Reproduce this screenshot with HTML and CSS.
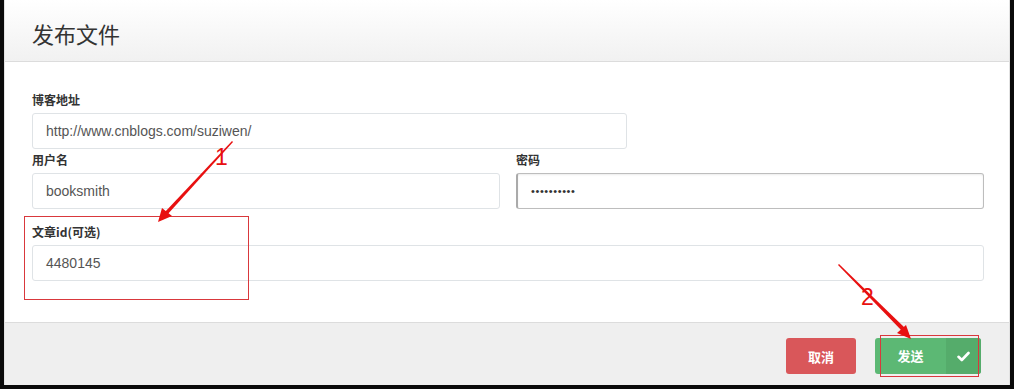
FILE: index.html
```html
<!DOCTYPE html>
<html lang="zh-CN">
<head>
    <meta charset="UTF-8">
    <title>发布文件</title>
    <link rel="stylesheet" href="styles.css">
</head>
<body>
    <div class="modal">
        <div class="modal-header">
            <h3>发布文件</h3>
        </div>
        <div class="modal-body">
            <div class="form-group">
                <label>博客地址</label>
                <div class="input url">http://www.cnblogs.com/suziwen/</div>
            </div>
            <div class="form-row">
                <div class="form-group">
                    <label>用户名</label>
                    <div class="input">booksmith</div>
                </div>
                <div class="form-group">
                    <label>密码</label>
                    <div class="input password">••••••••••</div>
                </div>
            </div>
            <div class="form-group last">
                <label>文章id(可选)</label>
                <div class="input">4480145</div>
            </div>
        </div>
        <div class="modal-footer">
            <button class="btn btn-cancel">取消</button>
            <button class="btn btn-send">
                <span class="btn-text">发送</span>
                <span class="btn-icon">
                    <svg width="13" height="11" viewBox="0 0 13 11"><path d="M1.5 5.8 L4.8 9 L11.5 2" fill="none" stroke="#fff" stroke-width="2.6" stroke-linecap="round" stroke-linejoin="round"/></svg>
                </span>
            </button>
        </div>
    </div>

    <!-- red annotations drawn on top of the screenshot -->
    <svg class="marks" width="1014" height="389" viewBox="0 0 1014 389">
        <rect x="24.5" y="216.5" width="224" height="83" fill="none" stroke="#d9383c" stroke-width="1"/>
        <rect x="880.5" y="335.5" width="98" height="41" fill="none" stroke="#d9383c" stroke-width="1"/>
        <text x="215" y="165" class="num">1</text>
        <text x="861" y="305" class="num">2</text>
        <polygon points="232,141 233,142 167,215 164,213" fill="#e81010"/>
        <polygon points="158,222 162,208 172,216" fill="#e81010"/>
        <polygon points="838,265 839,264 906,329 903,332" fill="#e81010"/>
        <polygon points="911,339 897,333 906,325" fill="#e81010"/>
    </svg>
</body>
</html>
```

FILE: styles.css
```css
body {
    margin: 0;
    width: 1014px;
    height: 389px;
    background: #0a0a0a;
    position: relative;
    overflow: hidden;
    font-family: "Liberation Sans", "Noto Sans CJK SC", sans-serif;
}
.modal {
    margin-left: 4px;
    width: 1006px;
    height: 385px;
    background: #fff;
    border-left: 1px solid #e2e2e2;
    border-right: 1px solid #e2e2e2;
    box-sizing: border-box;
    display: flex;
    flex-direction: column;
}
.modal-header {
    height: 62px;
    box-sizing: border-box;
    padding-left: 27px;
    display: flex;
    align-items: center;
    background: linear-gradient(to bottom, #ffffff, #f1f1f1);
    border-bottom: 1px solid #dcdcdc;
}
.modal-header h3 {
    margin: 0;
    font-family: "Noto Sans CJK SC", sans-serif;
    font-weight: 400;
    font-size: 22px;
    color: #333;
    padding-top: 4px;
}
.modal-body {
    flex: 1;
    padding: 28px 25px 0 27px;
}
.form-row {
    display: flex;
    gap: 16px;
}
.form-row .form-group {
    flex: 1;
}
.form-group.last {
    margin-top: 13px;
}
label {
    display: block;
    height: 20px;
    line-height: 20px;
    margin-bottom: 3px;
    font-family: "Noto Sans CJK SC", sans-serif;
    font-weight: 700;
    font-size: 12px;
    color: #333;
}
.input {
    height: 36px;
    box-sizing: border-box;
    border: 1px solid #dfe3e6;
    border-radius: 3px;
    padding-left: 13px;
    line-height: 34px;
    font-size: 14px;
    color: #555;
    background: #fff;
}
.input.url {
    width: 595px;
    margin-bottom: 1px;
}
.input.password {
    border-color: #bdbdbd;
    border-left: 2px solid #aaa;
    box-shadow: inset 0 1px 2px rgba(0,0,0,0.08);
    font-size: 11px;
    letter-spacing: 0.6px;
    color: #333;
}
.modal-footer {
    height: 63px;
    box-sizing: border-box;
    background: #efefef;
    border-top: 1px solid #dcdcdc;
    display: flex;
    justify-content: flex-end;
    align-items: flex-start;
    padding: 15px 28px 0 0;
    gap: 19px;
}
.btn {
    height: 36px;
    border: none;
    border-radius: 3px;
    padding: 0;
    font-family: "Noto Sans CJK SC", sans-serif;
    font-weight: 700;
    font-size: 13px;
    color: #fff;
    cursor: pointer;
}
.btn-cancel {
    width: 70px;
    background: #d9575a;
}
.btn-send {
    width: 106px;
    background: #5cb874;
    display: flex;
    overflow: hidden;
}
.btn-text {
    flex: 1;
    line-height: 36px;
}
.btn-icon {
    width: 35px;
    height: 36px;
    background: #55ac6b;
    display: flex;
    align-items: center;
    justify-content: center;
}
.marks {
    position: absolute;
    left: 0;
    top: 0;
}
.num {
    font-family: "Liberation Sans", sans-serif;
    font-size: 23px;
    fill: #e81010;
}
```
